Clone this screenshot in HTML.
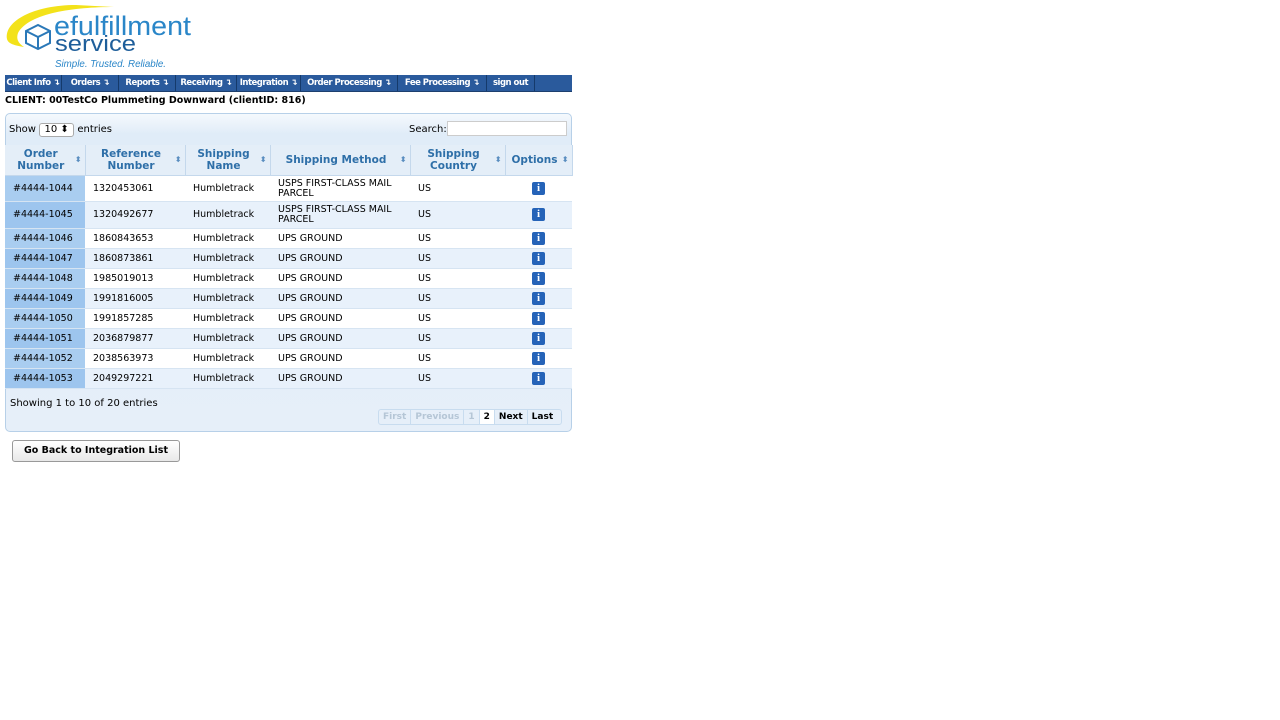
<!DOCTYPE html><html><head><style>
*{box-sizing:border-box}
body{margin:0;background:#fff;font-family:"DejaVu Sans","Liberation Sans",sans-serif;font-size:10px;color:#000;position:relative;width:1280px;height:720px}
.abs{position:absolute}
.nav{left:5px;top:75px;width:567px;height:17px;background:#2a5a9c;border-bottom:1px solid #1d3f6e;display:flex}
.nav div{color:#fff;font-weight:bold;font-size:8.5px;line-height:16px;border-right:1px solid #153a6b;text-align:center;letter-spacing:-0.5px;white-space:nowrap;overflow:hidden}
.box{left:5px;top:113px;width:567px;height:319px;border:1px solid #b7d0e8;border-radius:5px;background:linear-gradient(#f5f9fd,#e0ecf8 20px,#e6eff9)}
table{position:absolute;left:5px;top:145px;border-collapse:collapse;width:567px;font-size:9.5px;table-layout:fixed}
th{color:#2e6fa8;font-size:10.5px;font-weight:bold;height:30px;border-right:1px solid #c4d8ec;border-bottom:1px solid #c4d8ec;background:#e4eef8;position:relative;line-height:12px;padding:0 8px 0 0}
th:after{content:"⬍";position:absolute;right:3px;top:9px;font-size:8px;color:#5a8ec0}
td{padding:1px 0 0 8px;height:20px;border-bottom:1px solid #d6e4f2;line-height:10px}
tr.a td{background:#fff}tr.b td{background:#e8f1fb}
tr.a td:first-child{background:#a9cdf0}tr.b td:first-child{background:#9dc5ee}
.i{display:inline-block;width:13px;height:13px;background:#2563b8;border-radius:2px;color:#fff;font-weight:bold;font-size:11px;line-height:13px;text-align:center;font-family:"Liberation Serif",serif;vertical-align:middle}
.pg{left:378px;top:409px;width:184px;display:flex;border:1px solid #c8dcef;border-radius:3px;font-weight:bold;font-size:9px}
.pg span{padding:0 4px;line-height:14px;border-right:1px solid #c8dcef;white-space:nowrap}
</style></head><body>
<svg class="abs" style="left:4px;top:3px" width="190" height="68">
<path d="M3 36 C0 18 30 2 72 2 L110 4 C70 4 25 10 14 30 C12 36 14 40 20 44 C8 42 4 40 3 36Z" fill="#f3e21a"/>
<path d="M22 28 L34 22 L46 28 L46 40 L34 46 L22 40Z M22 28 L34 34 L46 28 M34 34 L34 46" fill="none" stroke="#2a78b8" stroke-width="2"/>
<text x="50" y="32" font-family="Liberation Sans" font-size="27" fill="#2a86c8" textLength="137" lengthAdjust="spacingAndGlyphs">efulfillment</text>
<text x="51" y="48" font-family="Liberation Sans" font-size="22" fill="#1e5e9a" textLength="81" lengthAdjust="spacingAndGlyphs">service</text>
<text x="51" y="64" font-family="Liberation Sans" font-style="italic" font-size="10" fill="#2a86c8" textLength="111" lengthAdjust="spacingAndGlyphs">Simple. Trusted. Reliable.</text>
</svg>
<div class="abs nav"><div style="width:57px">Client Info ↴</div><div style="width:57px">Orders ↴</div><div style="width:57px">Reports ↴</div><div style="width:61px">Receiving ↴</div><div style="width:64px">Integration ↴</div><div style="width:97px">Order Processing ↴</div><div style="width:89px">Fee Processing ↴</div><div style="width:48px">sign out</div></div>
<div class="abs" style="left:5px;top:95px;font-weight:bold;font-size:9.5px">CLIENT: 00TestCo Plummeting Downward (clientID: 816)</div>
<div class="abs box"></div>
<div class="abs" style="left:9px;top:123px">Show <span style="display:inline-block;width:35px;height:14px;border:1px solid #aaa;border-radius:3px;background:#fff;text-align:center;line-height:12px">10 ⬍</span> entries</div>
<div class="abs" style="left:409px;top:124px">Search:</div>
<div class="abs" style="left:447px;top:121px;width:120px;height:15px;border:1px solid #ccc;background:#fff"></div>
<table>
<colgroup><col style="width:80px"><col style="width:100px"><col style="width:85px"><col style="width:140px"><col style="width:95px"><col style="width:67px"></colgroup>
<tr><th>Order<br>Number</th><th>Reference<br>Number</th><th>Shipping<br>Name</th><th>Shipping Method</th><th>Shipping<br>Country</th><th>Options</th></tr>
<tr class="a"><td style="height:26px">#4444-1044</td><td>1320453061</td><td>Humbletrack</td><td>USPS FIRST-CLASS MAIL<br>PARCEL</td><td>US</td><td style="text-align:center;padding:0"><span class="i">i</span></td></tr>
<tr class="b"><td style="height:27px">#4444-1045</td><td>1320492677</td><td>Humbletrack</td><td>USPS FIRST-CLASS MAIL<br>PARCEL</td><td>US</td><td style="text-align:center;padding:0"><span class="i">i</span></td></tr>
<tr class="a"><td>#4444-1046</td><td>1860843653</td><td>Humbletrack</td><td>UPS GROUND</td><td>US</td><td style="text-align:center;padding:0"><span class="i">i</span></td></tr>
<tr class="b"><td>#4444-1047</td><td>1860873861</td><td>Humbletrack</td><td>UPS GROUND</td><td>US</td><td style="text-align:center;padding:0"><span class="i">i</span></td></tr>
<tr class="a"><td>#4444-1048</td><td>1985019013</td><td>Humbletrack</td><td>UPS GROUND</td><td>US</td><td style="text-align:center;padding:0"><span class="i">i</span></td></tr>
<tr class="b"><td>#4444-1049</td><td>1991816005</td><td>Humbletrack</td><td>UPS GROUND</td><td>US</td><td style="text-align:center;padding:0"><span class="i">i</span></td></tr>
<tr class="a"><td>#4444-1050</td><td>1991857285</td><td>Humbletrack</td><td>UPS GROUND</td><td>US</td><td style="text-align:center;padding:0"><span class="i">i</span></td></tr>
<tr class="b"><td>#4444-1051</td><td>2036879877</td><td>Humbletrack</td><td>UPS GROUND</td><td>US</td><td style="text-align:center;padding:0"><span class="i">i</span></td></tr>
<tr class="a"><td>#4444-1052</td><td>2038563973</td><td>Humbletrack</td><td>UPS GROUND</td><td>US</td><td style="text-align:center;padding:0"><span class="i">i</span></td></tr>
<tr class="b"><td>#4444-1053</td><td>2049297221</td><td>Humbletrack</td><td>UPS GROUND</td><td>US</td><td style="text-align:center;padding:0"><span class="i">i</span></td></tr>
</table>
<div class="abs" style="left:10px;top:398px">Showing 1 to 10 of 20 entries</div>
<div class="abs pg"><span style="color:#b5c6d6">First</span><span style="color:#b5c6d6">Previous</span><span style="color:#b5c6d6">1</span><span style="background:#fff">2</span><span>Next</span><span style="border:0">Last</span></div>
<div class="abs" style="left:12px;top:440px;width:168px;height:22px;border:1px solid #999;border-radius:3px;background:linear-gradient(#fff,#e8e8e8);text-align:center;line-height:20px;font-weight:bold;font-size:9.5px">Go Back to Integration List</div>
</body></html>
